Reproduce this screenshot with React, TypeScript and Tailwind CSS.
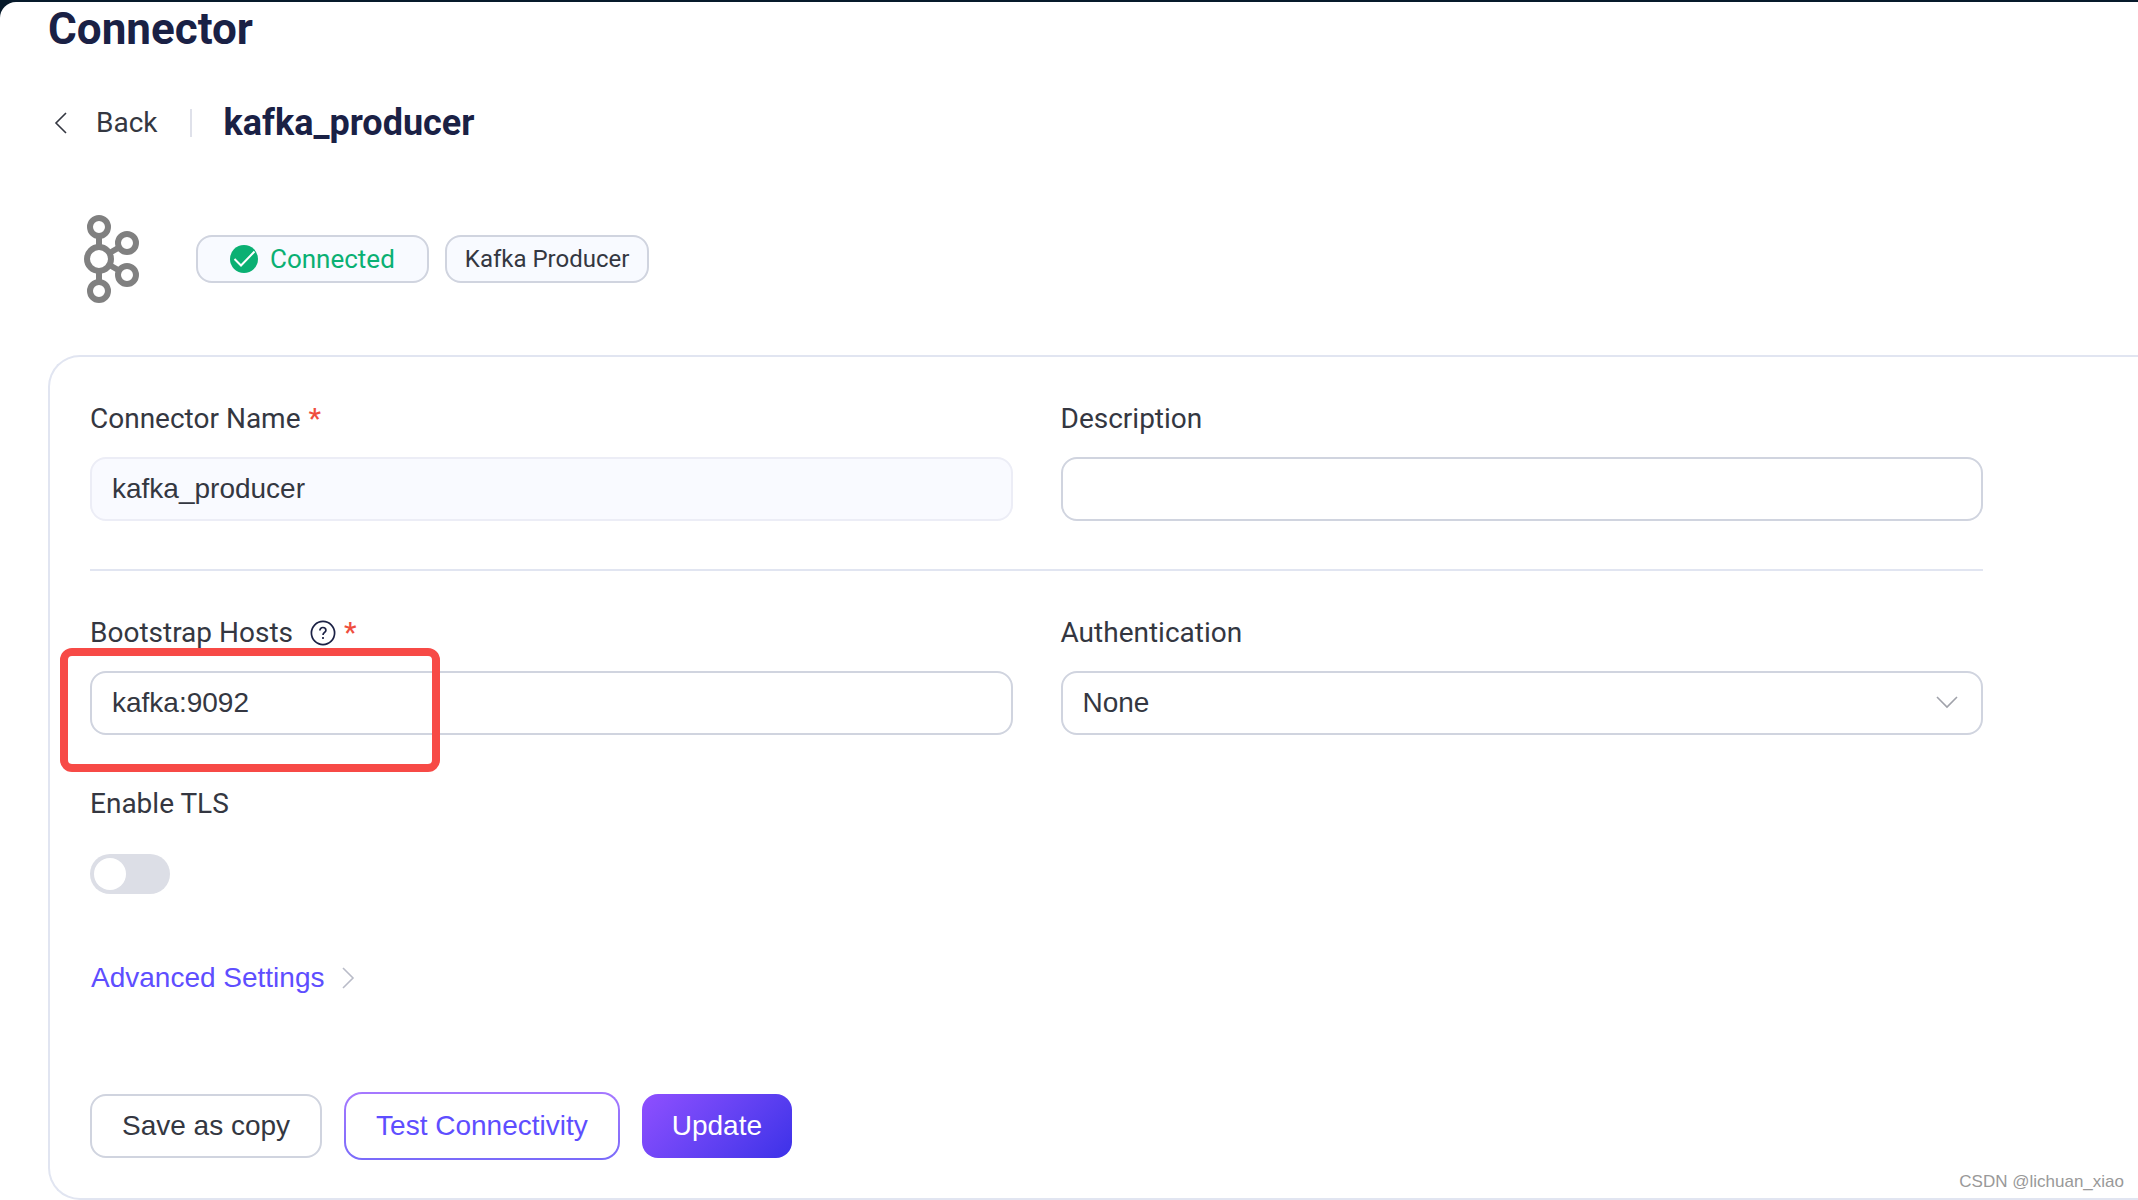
import React, { useState } from 'react';
import clsx from 'clsx';

const controlClass =
  'h-16 w-full rounded-2xl border-2 px-5 font-[Liberation_Sans,sans-serif] text-[28px] text-[#343741] outline-none';
const editableClass = 'border-[#d0d4df] bg-white';
const lockedClass = 'border-[#ecedf6] bg-[#f9faff]';

interface FieldProps {
  id: string;
  label: string;
  required?: boolean;
  help?: boolean;
  children: React.ReactNode;
}

const HelpIcon = () => (
  <svg viewBox="0 0 26 26" className="ml-[17px] size-[26px]" fill="none" stroke="#1b2145" strokeWidth="1.7" aria-hidden="true">
    <circle cx="13" cy="13" r="11.6" />
    <path d="M9.900 10.400c0-1.800 1.300-2.900 3-2.900s3 1.100 3 2.700c0 2.100-2.900 2.300-2.900 4.800M13 16.900v2" />
  </svg>
);

const KafkaLogo = () => (
  <svg viewBox="0 0 56 90" className="h-[90px] w-14" fill="none" stroke="#808080" strokeWidth="6" role="img" aria-label="Kafka">
    <circle cx="15" cy="13" r="9" />
    <circle cx="15" cy="45" r="12" />
    <circle cx="15" cy="77" r="9" />
    <circle cx="43" cy="29" r="9" />
    <circle cx="43" cy="61" r="9" />
    <path d="M15 22v11M15 57v11M25.500 39l9.500-5.500M25.500 51l9.500 5.500" />
  </svg>
);

const Field: React.FC<FieldProps> = ({ id, label, required, help, children }) => (
  <div className="flex flex-col gap-4">
    <label htmlFor={id} className="flex items-center text-[28px] leading-[44px]">
      {label}
      {help && <HelpIcon />}
      {required && <span className="ml-2 font-medium text-[#ef4e3e]">*</span>}
    </label>
    {children}
  </div>
);

export default function App() {
  const [name, setName] = useState('kafka_producer');
  const [description, setDescription] = useState('');
  const [hosts, setHosts] = useState('kafka:9092');
  const [tls, setTls] = useState(false);

  return (
    <div className="bg-[#071a2b] pt-0.5 font-[Roboto,sans-serif] text-[#343741]">
      <main className="relative rounded-tl-2xl bg-white pl-12">
        <h1 className="text-[44px] leading-[54px] font-bold text-[#1a2145]">Connector</h1>

        <div className="mt-[39px] flex h-14 items-center">
          <a href="#connectors" className="flex items-center text-[28px]">
            <svg viewBox="0 0 24 24" className="size-6" fill="none" stroke="#343741" strokeWidth="1.6" aria-hidden="true">
              <path d="M18 2 8 12l10 10" />
            </svg>
            <span className="ml-6">Back</span>
          </a>
          <span className="mx-8 h-7 w-0.5 bg-[#dfe1ea]" />
          <h2 className="text-[36px] font-bold text-[#1a2145]">kafka_producer</h2>
        </div>

        <div className="mt-[63px] flex items-center pl-9">
          <KafkaLogo />
          <span className="ml-14 flex h-12 items-center gap-3 rounded-2xl border-2 border-[#d0d4df] bg-[#f8faff] px-8 text-[26px] text-[#0ab073]">
            <svg viewBox="0 0 28 28" className="size-7" fill="none" aria-hidden="true">
              <circle cx="14" cy="14" r="14" fill="#0ab073" />
              <path d="m4.500 14 6.500 6.500L24.500 6.500" stroke="white" strokeWidth="2" />
            </svg>
            Connected
          </span>
          <span className="ml-4 flex h-12 items-center rounded-2xl border-2 border-[#d0d4df] bg-[#f8faff] px-[18px] text-[24px]">
            Kafka Producer
          </span>
        </div>

        <form
          className="mt-[51px] rounded-l-[32px] border-2 border-r-0 border-[#e1e5f1] pt-10 pr-[155px] pb-[38px] pl-10"
          onSubmit={(e) => e.preventDefault()}
        >
          <div className="grid grid-cols-2 gap-x-12 border-b-2 border-[#e1e5f1] pb-12">
            <Field id="name" label="Connector Name" required>
              <input
                id="name"
                readOnly
                className={clsx(controlClass, lockedClass)}
                value={name}
                onChange={(e) => setName(e.target.value)}
              />
            </Field>
            <Field id="description" label="Description">
              <input
                id="description"
                className={clsx(controlClass, editableClass)}
                value={description}
                onChange={(e) => setDescription(e.target.value)}
              />
            </Field>
          </div>

          <div className="mt-10 grid grid-cols-2 gap-x-12">
            <div className="relative">
              <Field id="hosts" label="Bootstrap Hosts" required help>
                <input
                  id="hosts"
                  className={clsx(controlClass, editableClass)}
                  value={hosts}
                  onChange={(e) => setHosts(e.target.value)}
                />
              </Field>
              <div className="pointer-events-none absolute top-[37px] -left-[30px] h-[124px] w-[380px] rounded-xl border-8 border-[#f74a46]" />
            </div>
            <Field id="auth" label="Authentication">
              <div className="relative">
                <select id="auth" className={clsx(controlClass, editableClass, 'appearance-none')} defaultValue="None">
                  <option>None</option>
                  <option>Basic auth</option>
                  <option>Kerberos</option>
                </select>
                <svg viewBox="0 0 24 24" className="pointer-events-none absolute top-5 right-6 size-6" fill="none" stroke="#a0a2aa" strokeWidth="1.6" aria-hidden="true">
                  <path d="M2 6l10 10L22 6" />
                </svg>
              </div>
            </Field>
          </div>

          <div className="mt-12 flex flex-col items-start gap-[29px]">
            <label htmlFor="tls" className="text-[28px] leading-[42px]">Enable TLS</label>
            <input
              id="tls"
              type="checkbox"
              role="switch"
              checked={tls}
              onChange={(e) => setTls(e.target.checked)}
              className="h-10 w-20 appearance-none rounded-full bg-[#dcdee6] p-1 before:block before:size-8 before:rounded-full before:bg-white checked:bg-[#5e4eff] checked:before:ml-auto"
            />
          </div>

          <button type="button" className="mt-[62px] flex items-center gap-3 pl-px font-[Liberation_Sans,sans-serif] text-[28px] leading-[44px] text-[#5e4eff]">
            Advanced Settings
            <svg viewBox="0 0 24 24" className="size-6" fill="none" stroke="#b9bcc8" strokeWidth="1.6" aria-hidden="true">
              <path d="M6 2l10 10L6 22" />
            </svg>
          </button>

          <div className="mt-[92px] flex items-center gap-[22px] font-[Liberation_Sans,sans-serif] text-[28px]">
            <button type="button" className="h-16 rounded-2xl border-2 border-[#d0d4df] px-[30px]">
              Save as copy
            </button>
            <button type="button" className="h-[68px] rounded-[18px] bg-linear-to-b from-[#a678ff] to-[#7a6bfa] p-0.5 text-[#5e4eff]">
              <span className="flex h-full items-center rounded-2xl bg-white px-[30px]">Test Connectivity</span>
            </button>
            <button type="submit" className="h-16 rounded-2xl bg-linear-135 from-[#8f4fff] to-[#3c31e8] px-[30px] text-white">
              Update
            </button>
          </div>
        </form>

        <span className="absolute right-[14px] bottom-[6px] font-[Liberation_Sans,sans-serif] text-[17px] leading-6 text-[#999]">
          CSDN @lichuan_xiao
        </span>
      </main>
    </div>
  );
}
